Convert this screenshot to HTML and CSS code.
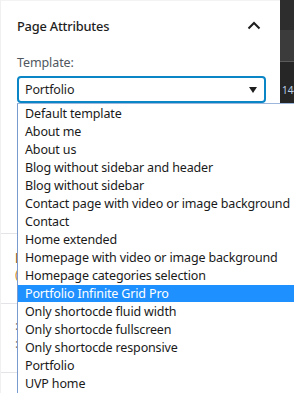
FILE: index.html
```html
<!DOCTYPE html>
<html>
<head>
<meta charset="utf-8">
<link rel="stylesheet" href="styles.css">
</head>
<body>
<div class="screen">
  <div class="panel">
    <div class="panel-head">
      <h2 class="panel-title">Page Attributes</h2>
      <svg class="chevron" width="14" height="9" viewBox="0 0 14 9"><path d="M1.5 7.5 L7 2 L12.5 7.5" fill="none" stroke="#1e1e1e" stroke-width="2"/></svg>
    </div>
    <div class="field">
      <div class="label">Template:</div>
      <div class="select">
        <span>Portfolio</span>
        <svg class="caret" width="8" height="6" viewBox="0 0 8 6"><path d="M0 0 H8 L4 6 Z" fill="#1e1e1e"/></svg>
      </div>
    </div>
    <div class="under">
      <div class="under-sec s1"></div>
      <div class="under-sec s2"><span class="peek p-brown">l</span><span class="peek p-orange">(</span></div>
      <div class="under-sec s3"><span class="peek p-gray">:</span><span class="peek p-gray">:</span></div>
      <div class="under-sec s4"></div>
    </div>
  </div>
  <div class="strip">
    <div class="strip-a"></div>
    <div class="strip-b"></div>
    <div class="strip-c"><span class="num">144</span></div>
    <div class="strip-d"></div>
  </div>
  <ul class="dropdown">
    <li>Default template</li>
    <li>About me</li>
    <li>About us</li>
    <li>Blog without sidebar and header</li>
    <li>Blog without sidebar</li>
    <li>Contact page with video or image background</li>
    <li>Contact</li>
    <li>Home extended</li>
    <li>Homepage with video or image background</li>
    <li>Homepage categories selection</li>
    <li class="active">Portfolio Infinite Grid Pro</li>
    <li>Only shortocde fluid width</li>
    <li>Only shortocde fullscreen</li>
    <li>Only shortocde responsive</li>
    <li>Portfolio</li>
    <li>UVP home</li>
  </ul>
</div>
</body>
</html>
```
FILE: styles.css
```css
* { box-sizing: border-box; }
html, body { margin: 0; padding: 0; }
body {
  width: 294px;
  height: 393px;
  overflow: hidden;
  background: #fff;
  font-family: "Noto Sans", "Open Sans", sans-serif;
  color: #1e1e1e;
}
.screen {
  position: relative;
  display: flex;
  width: 294px;
  height: 393px;
}
.panel {
  width: 280px;
  height: 393px;
  border-left: 1px solid #f0f0f1;
  border-top: 1px solid #f3f3f3;
  padding: 0 15px 0 16px;
  display: flex;
  flex-direction: column;
}
.panel-head {
  height: 49px;
  display: flex;
  align-items: center;
  justify-content: space-between;
  padding-right: 1px;
}
.panel-title {
  margin: 0;
  font-size: 12.8px;
  font-weight: 500;
  letter-spacing: -0.2px;
  color: #1e1e1e;
}
.chevron { margin-right: 3px; }
.field { display: flex; flex-direction: column; }
.label {
  font-size: 12.5px;
  letter-spacing: -0.1px;
  color: #50575e;
  height: 26px;
  line-height: 26px;
}
.select {
  width: 249px;
  height: 27px;
  border: 2px solid #0a86c6;
  border-radius: 4px;
  display: flex;
  align-items: center;
  justify-content: space-between;
  padding: 0 7px 0 6px;
  font-size: 12.5px;
  letter-spacing: -0.15px;
  color: #1e1e1e;
}
.under { flex: 1; display: flex; flex-direction: column; margin-left: -16px; padding-top: 130px; }
.under-sec { border-bottom: 1px solid #e2e4e7; position: relative; }
.s1 { height: 0; }
.s2 { height: 70px; }
.s3 { height: 69px; }
.s4 { flex: 1; border-bottom: none; }
.peek { position: absolute; left: 14px; width: 3px; overflow: hidden; font-size: 13px; line-height: 14px; }
.p-brown { top: 17px; color: #8a5a2b; }
.p-orange { top: 33px; color: #c88a3a; }
.p-gray { color: #777; }
.s3 .p-gray:first-child { top: 14px; }
.s3 .p-gray:last-child { top: 32px; }
.strip {
  width: 14px;
  height: 393px;
  display: flex;
  flex-direction: column;
}
.strip-a { height: 30px; background: #2d2d2d; }
.strip-b { height: 32px; background: #3b3b3b; border-bottom: 1px solid #5a5a5a; }
.strip-c { height: 41px; background: #262626; padding-top: 15px; overflow: hidden; }
.strip-d { flex: 1; background: #fff; }
.num { font-size: 10px; color: #bcd0e6; padding-left: 2px; white-space: nowrap; }
.dropdown {
  position: absolute;
  left: 17px;
  top: 103px;
  right: 0;
  bottom: 0;
  margin: 0;
  padding: 1px 0 0;
  list-style: none;
  background: #fff;
  border-left: 1px solid #7a9bd0;
  border-top: 1px solid #9db6dc;
}
.dropdown li {
  height: 18px;
  line-height: 18px;
  font-size: 12.5px;
  letter-spacing: -0.15px;
  padding-left: 7px;
  white-space: nowrap;
  color: #1a1a1a;
}
.dropdown li.active { background: #1e90ff; color: #fff; height: 17px; line-height: 17px; margin-bottom: 1px; }
```
